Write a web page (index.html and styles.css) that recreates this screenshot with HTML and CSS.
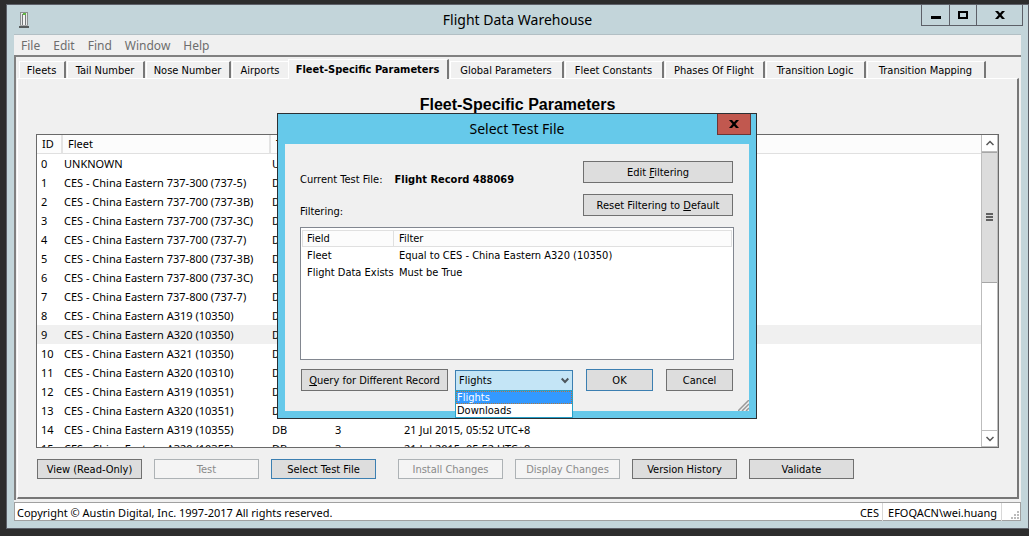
FILE: index.html
```html
<!DOCTYPE html>
<html lang="en">
<head>
<meta charset="utf-8">
<title>Flight Data Warehouse</title>
<link rel="stylesheet" href="styles.css">
</head>
<body>
<main class="window">
  <header class="titlebar">
    <svg class="app-icon" width="12" height="18" viewBox="0 0 12 18" aria-hidden="true">
      <rect x="2.500" y="1.500" width="7" height="13" fill="#e6e8e8" stroke="#8b8f90"/>
      <path d="M4.500 3v11M7.500 3v11" stroke="#777b7c"/>
      <path d="M6 4v10" stroke="#fff"/>
      <path d="M5 3h3" stroke="#62b545" stroke-width="2"/>
      <path d="M2 14.500h8" stroke="#aaa"/>
      <path d="M1 16h10" stroke="#333" stroke-width="1.500"/>
    </svg>
    <h1 class="titlebar-text">Flight Data Warehouse</h1>
    <div class="window-controls">
      <button class="control" type="button" aria-label="Minimize"><svg width="10" height="8" viewBox="0 0 10 8"><path d="M0 6.500h10" stroke="#000" stroke-width="3"/></svg></button>
      <button class="control" type="button" aria-label="Maximize"><svg width="10" height="8" viewBox="0 0 10 8"><path d="M1 1h8v6H1z" fill="none" stroke="#000" stroke-width="2"/></svg></button>
      <button class="control control-close" type="button" aria-label="Close"><svg width="10" height="8" viewBox="0 0 10 8"><path d="M0 0h3l2 2.200L7 0h3L6.500 4 10 8H7L5 5.800 3 8H0l3.500-4z"/></svg></button>
    </div>
  </header>

  <div class="client">
    <nav class="menubar">
      <button class="menu" type="button">File</button>
      <button class="menu" type="button">Edit</button>
      <button class="menu" type="button">Find</button>
      <button class="menu" type="button">Window</button>
      <button class="menu" type="button">Help</button>
    </nav>

    <div class="workspace">
      <div class="tabs" role="tablist">
        <button class="tab" type="button" role="tab">Fleets</button>
        <button class="tab" type="button" role="tab">Tail Number</button>
        <button class="tab" type="button" role="tab">Nose Number</button>
        <button class="tab" type="button" role="tab">Airports</button>
        <button class="tab tab-active" type="button" role="tab" aria-selected="true">Fleet-Specific Parameters</button>
        <button class="tab" type="button" role="tab">Global Parameters</button>
        <button class="tab" type="button" role="tab">Fleet Constants</button>
        <button class="tab" type="button" role="tab">Phases Of Flight</button>
        <button class="tab" type="button" role="tab">Transition Logic</button>
        <button class="tab" type="button" role="tab">Transition Mapping</button>
      </div>

      <section class="page">
        <h2 class="page-title">Fleet-Specific Parameters</h2>
        <div class="list">
          <div class="list-body">
            <table class="fleets">
              <colgroup><col class="col-id"><col class="col-fleet"><col class="col-type"><col class="col-version"><col></colgroup>
              <thead><tr><th>ID</th><th>Fleet</th><th>Type</th><th></th><th></th></tr></thead>
              <tbody>
                <tr><td>0</td><td>UNKNOWN</td><td>UNKNOWN</td><td></td><td></td></tr>
                <tr><td>1</td><td>CES - China Eastern 737-300 (737-5)</td><td>DB</td><td></td><td></td></tr>
                <tr><td>2</td><td>CES - China Eastern 737-700 (737-3B)</td><td>DB</td><td></td><td></td></tr>
                <tr><td>3</td><td>CES - China Eastern 737-700 (737-3C)</td><td>DB</td><td></td><td></td></tr>
                <tr><td>4</td><td>CES - China Eastern 737-700 (737-7)</td><td>DB</td><td></td><td></td></tr>
                <tr><td>5</td><td>CES - China Eastern 737-800 (737-3B)</td><td>DB</td><td></td><td></td></tr>
                <tr><td>6</td><td>CES - China Eastern 737-800 (737-3C)</td><td>DB</td><td></td><td></td></tr>
                <tr><td>7</td><td>CES - China Eastern 737-800 (737-7)</td><td>DB</td><td></td><td></td></tr>
                <tr><td>8</td><td>CES - China Eastern A319 (10350)</td><td>DB</td><td></td><td></td></tr>
                <tr class="selected"><td>9</td><td>CES - China Eastern A320 (10350)</td><td>DB</td><td></td><td></td></tr>
                <tr><td>10</td><td>CES - China Eastern A321 (10350)</td><td>DB</td><td></td><td></td></tr>
                <tr><td>11</td><td>CES - China Eastern A320 (10310)</td><td>DB</td><td></td><td></td></tr>
                <tr><td>12</td><td>CES - China Eastern A319 (10351)</td><td>DB</td><td></td><td></td></tr>
                <tr><td>13</td><td>CES - China Eastern A320 (10351)</td><td>DB</td><td></td><td></td></tr>
                <tr><td>14</td><td>CES - China Eastern A319 (10355)</td><td>DB</td><td>3</td><td>21 Jul 2015, 05:52 UTC+8</td></tr>
                <tr><td>15</td><td>CES - China Eastern A320 (10355)</td><td>DB</td><td>3</td><td>21 Jul 2015, 05:52 UTC+8</td></tr>
              </tbody>
            </table>
          </div>
          <div class="scrollbar">
            <button class="scroll-button" type="button" aria-label="Scroll up"><svg width="8" height="6" viewBox="0 0 8 6"><path d="M.5 5 4 1.500 7.500 5" fill="none" stroke="#555" stroke-width="1.500"/></svg></button>
            <div class="scroll-track"><div class="scroll-thumb"><svg width="7" height="8" viewBox="0 0 7 8"><path d="M0 1h7M0 4h7M0 7h7" stroke="#606060" stroke-width="2"/></svg></div></div>
            <button class="scroll-button scroll-down" type="button" aria-label="Scroll down"><svg width="8" height="6" viewBox="0 0 8 6"><path d="M.5 1 4 4.500 7.500 1" fill="none" stroke="#555" stroke-width="1.500"/></svg></button>
          </div>
        </div>
        <div class="actions">
          <div class="action-group">
            <button class="button" type="button">View (Read-Only)</button>
            <button class="button" type="button" disabled>Test</button>
            <button class="button button-default" type="button">Select Test File</button>
          </div>
          <div class="action-group">
            <button class="button" type="button" disabled>Install Changes</button>
            <button class="button" type="button" disabled>Display Changes</button>
            <button class="button" type="button">Version History</button>
            <button class="button" type="button">Validate</button>
          </div>
        </div>
      </section>
    </div>

    <footer class="statusbar">
      <span class="copyright">Copyright © Austin Digital, Inc. 1997-2017 All rights reserved.</span>
      <span class="status-cell">CES</span>
      <span class="status-cell status-user">EFOQACN\wei.huang</span>
      <svg class="status-grip" width="9" height="9" viewBox="0 0 9 9" aria-hidden="true"><path d="M6 1h2M3 4h2M6 4h2M0 7h2M3 7h2M6 7h2" stroke="#bbb" stroke-width="2"/></svg>
    </footer>
  </div>

  <section class="dialog" role="dialog" aria-labelledby="dialog-title">
    <header class="dialog-titlebar">
      <h2 class="titlebar-text dialog-title" id="dialog-title">Select Test File</h2>
      <button class="dialog-close" type="button" aria-label="Close"><svg width="10" height="8" viewBox="0 0 10 8"><path d="M0 0h3l2 2.200L7 0h3L6.500 4 10 8H7L5 5.800 3 8H0l3.500-4z"/></svg></button>
    </header>
    <form class="dialog-body">
      <div class="dialog-top">
        <div class="dialog-labels">
          <div class="current"><span>Current Test File:</span><strong>Flight Record 488069</strong></div>
          <div>Filtering:</div>
        </div>
        <div class="dialog-side">
          <button class="button button-tall" type="button"><span>Edit <u>F</u>iltering</span></button>
          <button class="button button-tall" type="button"><span>Reset Filtering to <u>D</u>efault</span></button>
        </div>
      </div>
      <div class="filter-list">
        <table class="filters">
          <colgroup><col class="col-field"><col></colgroup>
          <thead><tr><th>Field</th><th>Filter</th></tr></thead>
          <tbody>
            <tr><td>Fleet</td><td>Equal to CES - China Eastern A320 (10350)</td></tr>
            <tr><td>Flight Data Exists</td><td>Must be True</td></tr>
          </tbody>
        </table>
      </div>
      <div class="dialog-actions">
        <div class="query-group">
          <button class="button button-tall query" type="button"><span><u>Q</u>uery for Different Record</span></button>
          <div class="combo">
            <select class="combo-select" aria-label="Record type"><option>Flights</option><option>Downloads</option></select>
            <svg class="combo-arrow" width="8" height="7" viewBox="0 0 8 7" aria-hidden="true"><path d="M.7 1.500 4 5 7.300 1.500" fill="none" stroke="#4d565c" stroke-width="2"/></svg>
            <ul class="combo-menu" role="listbox" aria-label="Record type choices">
              <li class="combo-option combo-current" role="option" aria-selected="true">Flights</li>
              <li class="combo-option" role="option">Downloads</li>
            </ul>
          </div>
        </div>
        <button class="button button-tall button-default small" type="button">OK</button>
        <button class="button button-tall small" type="button">Cancel</button>
      </div>
      <svg class="dialog-grip" width="11" height="11" viewBox="0 0 11 11" aria-hidden="true"><path d="M0 11 11 0M4 11l7-7M8 11l3-3" stroke="#999" stroke-width="1.500"/></svg>
    </form>
  </section>
</main>
</body>
</html>
```
FILE: styles.css
```css
:root {
  --ui: "Noto Sans", "Open Sans", sans-serif;
  --compact: "DejaVu Sans Condensed", "DejaVu Sans", sans-serif;
  --face: #f0f0f0;
  --edge: #707070;
}

* { box-sizing: border-box; }

body {
  margin: 0;
  height: 100vh;
  display: flex;
  padding: 4px 0 7px 6px;
  background: #2d2d2d;
  color: #000;
  font: 11px/19px var(--ui);
}

button, select { margin: 0; padding: 0; border: 0; background: none; color: inherit; font: inherit; }
h1, h2, ul { margin: 0; padding: 0; font-weight: normal; }
svg { display: block; }
table { width: 100%; border-collapse: separate; border-spacing: 0; table-layout: fixed; }
th, td { padding: 0; text-align: left; font-weight: normal; white-space: nowrap; }
u { text-underline-offset: 1px; }

.window {
  position: relative;
  flex: 1;
  min-width: 0;
  display: flex;
  flex-direction: column;
  padding: 0 7px;
  border: 1px solid #5d6068;
  background: #c3d5da;
}

.titlebar { display: grid; grid-template-columns: 1fr auto 1fr; height: 30px; border-bottom: 1px solid #b2bfc4; }
.app-icon { margin: 6px 0 0 4px; }
.titlebar-text { font: 14px/29px var(--ui); }
.window-controls { justify-self: end; display: flex; height: 21px; margin-right: -2px; border: solid #5d6068; border-width: 0 1px 1px; }
.control { display: grid; place-items: center; width: 27px; }
.control + .control { border-left: 1px solid #5d6068; }
.control-close { width: 46px; }

.client { flex: 1; min-height: 0; display: flex; flex-direction: column; margin-bottom: 7px; background: var(--face); }
.menubar { display: flex; gap: 13px; height: 20px; padding-left: 7px; color: #6d6d6d; font-size: 12px; }

.workspace {
  flex: 1;
  min-height: 0;
  display: flex;
  flex-direction: column;
  padding: 2px 2px 1px 1px;
  border: solid #808080;
  border-width: 2px 0 0 2px;
}

.tabs {
  display: grid;
  grid-template-columns: 48fr 79fr 86fr 57fr 161fr 115fr 100fr 101fr 101fr 120fr 33fr;
  align-items: end;
  height: 19px;
  padding-left: 1px;
  font: 11px/17px var(--compact);
}
.tab {
  height: 17px;
  margin-left: 1px;
  padding-right: 1px;
  border: solid #fff;
  border-width: 1px 2px 0 1px;
  border-right-color: #777;
  white-space: nowrap;
}
.tab:has(+ .tab-active) { border-right: 0; }
.tab-active { height: 20px; margin: 0 0 -1px; background: var(--face); font-weight: bold; z-index: 1; }

.page {
  flex: 1;
  min-height: 0;
  display: flex;
  flex-direction: column;
  padding: 16px 18px 18px;
  border: 2px solid #777;
  border-top: 1px solid #fff;
  border-left: 1px solid #fff;
}
.page-title { text-align: center; font: bold 16px/20px "Liberation Sans", Arial, sans-serif; }

.list { flex: 1; min-height: 0; display: flex; margin-top: 19px; border: 1px solid #696969; background: #fff; }
.list-body { flex: 1; min-width: 0; overflow: hidden; }
.col-id { width: 26px; }
.col-fleet { width: 208px; }
.col-type { width: 63px; }
.col-version { width: 69px; }
.fleets th { height: 19px; padding-left: 5px; border-bottom: 1px solid #e0e0e0; background: #fcfcfc; line-height: 18px; }
.fleets th:nth-child(-n+2) { border-right: 2px solid #e3e3e3; }
.fleets td { height: 19px; padding-left: 1px; }
.fleets td:first-child { padding-left: 4px; }
.selected { background: #f0f0f0; }

.scrollbar { display: flex; flex-direction: column; width: 17px; border: 1px solid #bdbdbd; border-width: 0 1px; }
.scroll-button { display: grid; place-items: center; height: 17px; border-bottom: 1px solid #bdbdbd; }
.scroll-down { border: solid #bdbdbd; border-width: 1px 0; }
.scroll-track { flex: 1; }
.scroll-thumb { display: grid; place-items: center; height: 47%; border: 1px solid #a6a6a6; border-width: 1px 0; background: #dcdcdc; }

.actions { display: flex; gap: 22px; margin-top: 11px; padding-left: 1px; }
.action-group { display: flex; gap: 12px; }
.button {
  width: 105px;
  height: 20px;
  padding-top: 1px;
  border: 1px solid var(--edge);
  background: #ddd;
  font: 11px/17px var(--compact);
  white-space: nowrap;
}
.button:disabled { border-color: #adb2b5; background: #f4f4f4; color: #8a8a8a; }
.button-default { border-color: #3c7fb1; }

.statusbar { display: flex; align-items: center; height: 19px; margin-top: 2px; border: 1px solid #a0a0a0; background: #fff; line-height: 17px; }
.copyright { flex: 1; padding: 1px 0 0 2px; }
.status-cell { padding: 1px 3px 0; border-right: 1px solid #d8d8d8; }
.status-user { padding: 1px 4px 0 5px; }
.status-grip { align-self: end; margin-left: 9px; }

.dialog {
  position: absolute;
  z-index: 2;
  top: 108px;
  left: 0;
  right: 1px;
  width: 480px;
  margin: 0 auto;
  padding: 0 7px 7px;
  border: 1px solid #2b2f33;
  background: #66c9ea;
  font: 11px/14px var(--compact);
}
.dialog-titlebar { display: grid; grid-template-columns: 32px 1fr 34px; height: 30px; margin-right: -2px; text-align: center; }
.dialog-title { grid-column: 2; }
.dialog-close { display: grid; place-items: center; height: 21px; border: 1px solid #6b3535; border-top: 0; background: #c1584f; }
.dialog-body { position: relative; padding: 17px 15px 20px; background: var(--face); }
.dialog-top { display: flex; justify-content: space-between; padding-right: 1px; }
.dialog-labels { padding-top: 12px; display: flex; flex-direction: column; gap: 18px; }
.current { display: flex; gap: 12px; }
.dialog-side { display: grid; gap: 11px; width: 150px; align-content: start; }
.button-tall { width: auto; height: 22px; line-height: 19px; }
.filter-list { height: 133px; margin-top: 8px; padding: 2px 1px 1px; border: 1px solid #828790; background: #fff; }
.col-field { width: 92px; }
.filters th { height: 17px; padding-left: 5px; border: solid #e0e0e0; border-width: 1px 1px 1px 0; background: #fcfcfc; }
.filters th:first-child { padding-left: 4px; border-left-width: 1px; }
.filters td { height: 17px; padding-left: 5px; }
.dialog-actions { display: flex; gap: 13px; margin-top: 9px; padding: 0 1px; }
.query-group { flex: 1; display: flex; gap: 7px; }
.dialog-actions .query { width: 147px; }
.dialog-actions .small { width: 67px; }
.combo { position: relative; flex: 1; padding-top: 1px; }
.combo-select { display: block; appearance: none; width: 100%; height: 21px; padding-left: 3px; border: 1px solid #3c7fb1; background: #c4e5f6; line-height: 19px; }
.combo-arrow { position: absolute; top: 8px; right: 4px; pointer-events: none; }
.combo-menu { position: absolute; top: 21px; left: 0; right: 0; border: 1px solid #26a0c9; background: #fff; list-style: none; }
.combo-option { padding-left: 1px; line-height: 13px; }
.combo-current { background: #3399ff; color: #fff; outline: 1px dotted #b07840; outline-offset: -1px; }
.dialog-grip { position: absolute; right: 0; bottom: 0; }
```
